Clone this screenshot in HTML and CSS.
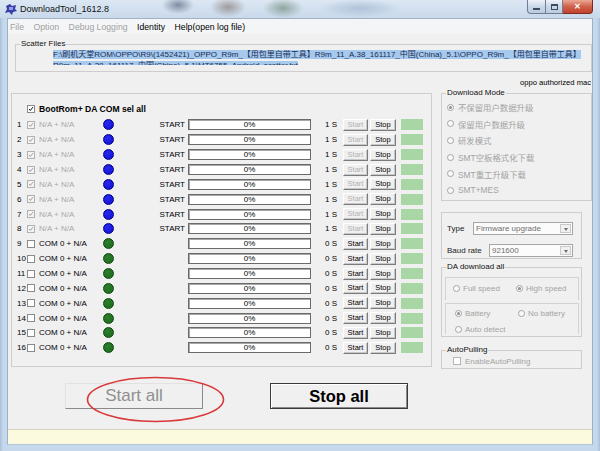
FILE: index.html
```html
<!DOCTYPE html>
<html lang="en">
<head>
    <meta charset="UTF-8">
    <title>DownloadTool_1612.8</title>
    <link rel="stylesheet" href="styles.css">
</head>
<body>
<div class="window">
    <div class="titlebar">
        <svg class="app-icon" width="12" height="11" viewBox="0 0 12 11">
            <path d="M1 2 L5 0 L7 2 L11 1 L10 5 L12 7 L8 8 L7 11 L4 8 L0 9 L2 5 Z" fill="#3a3fa8"/>
            <path d="M4 3 L8 3 L8 6 L4 6 Z" fill="#8fa0e6"/>
        </svg>
        <span class="title">DownloadTool_1612.8</span>
        <div class="caption">
            <span class="cap cap-min"><i></i></span>
            <span class="cap cap-max"><i></i></span>
            <span class="cap cap-close">&#x2715;</span>
        </div>
    </div>
    <div class="frame">
        <div class="client">
            <div class="menubar">
                <span class="menu off">File</span>
                <span class="menu off">Option</span>
                <span class="menu off">Debug Logging</span>
                <span class="menu">Identity</span>
                <span class="menu">Help(open log file)</span>
            </div>

            <fieldset class="group scatter">
                <legend>Scatter Files</legend>
                <div class="path">
                    <span class="sel">F:\刷机天堂ROM\OPPO\R9\(1452421)_OPPO_R9m_【用包里自带工具】R9m_11_A.38_161117_中国(China)_5.1\OPPO_R9m_【用包里自带工具】</span><br>
                    <span class="sel">R9m_11_A.38_161117_中国(China)_5.1\MT6755_Android_scatter.txt</span>
                </div>
            </fieldset>

            <div class="auth">oppo authorized mac</div>

            <div class="workspace">
                <div class="group ports">
                    <div class="sel-all">
                        <span class="check checked on"><svg viewBox="0 0 8 8"><polyline points="1.5,4 3.2,6 6.5,1.5"/></svg></span>
                        <b>BootRom+ DA COM sel all</b>
                    </div>
                    <div id="rows" class="rows"></div>
                </div>

                <div class="side">
                    <fieldset class="group mode">
                        <legend>Download Mode</legend>
                        <div class="opts">
                            <div class="opt"><span class="radio on"></span>不保留用户数据升级</div>
                            <div class="opt"><span class="radio"></span>保留用户数据升级</div>
                            <div class="opt"><span class="radio"></span>研发模式</div>
                            <div class="opt"><span class="radio"></span>SMT空板格式化下载</div>
                            <div class="opt"><span class="radio"></span>SMT重工升级下载</div>
                            <div class="opt"><span class="radio"></span>SMT+MES</div>
                        </div>
                    </fieldset>

                    <div class="group settings">
                        <div class="field">
                            <span class="field-label">Type</span>
                            <span class="combo type-combo">Firmware upgrade<span class="drop"></span></span>
                        </div>
                        <div class="field">
                            <span class="field-label">Baud rate</span>
                            <span class="combo baud-combo">921600<span class="drop"></span></span>
                        </div>
                    </div>

                    <fieldset class="group da">
                        <legend>DA download all</legend>
                        <div class="da-body">
                            <div class="sub speed">
                                <span class="opt-inline"><span class="radio"></span>Full speed</span>
                                <span class="opt-inline"><span class="radio on"></span>High speed</span>
                            </div>
                            <div class="sub battery">
                                <div class="sub-row">
                                    <span class="opt-inline"><span class="radio on"></span>Battery</span>
                                    <span class="opt-inline"><span class="radio"></span>No battery</span>
                                </div>
                                <div class="sub-row">
                                    <span class="opt-inline"><span class="radio"></span>Auto detect</span>
                                </div>
                            </div>
                        </div>
                    </fieldset>

                    <fieldset class="group pulling">
                        <legend>AutoPulling</legend>
                        <div class="opt-inline"><span class="check"></span>EnableAutoPulling</div>
                    </fieldset>
                </div>
            </div>

            <div class="actions">
                <button class="big start-all" disabled>Start all</button>
                <button class="big stop-all">Stop all</button>
                <svg class="mark" width="139" height="47" viewBox="0 0 139 47">
                    <ellipse cx="69.5" cy="23.5" rx="68" ry="22" fill="none" stroke="#d9383a" stroke-width="1.6"/>
                </svg>
            </div>

            <div class="statusbar"></div>
        </div>
    </div>
</div>

<script>
    const rows = document.getElementById("rows");
    const tick = '<svg viewBox="0 0 8 8"><polyline points="1.5,4 3.2,6 6.5,1.5"/></svg>';

    for (let i = 1; i <= 16; i++) {
        let found = i <= 8;
        let row = document.createElement("div");
        row.className = "port" + (found ? " found" : "");
        row.innerHTML =
            '<span class="num">' + i + '</span>' +
            '<span class="check' + (found ? ' checked' : '') + '">' + (found ? tick : '') + '</span>' +
            '<span class="port-name">' + (found ? 'N/A + N/A' : 'COM 0 + N/A') + '</span>' +
            '<span class="led"></span>' +
            '<span class="state">' + (found ? 'START' : '') + '</span>' +
            '<span class="progress">0%</span>' +
            '<span class="time">' + (found ? 1 : 0) + ' S</span>' +
            '<button class="mini"' + (found ? ' disabled' : '') + '>Start</button>' +
            '<button class="mini">Stop</button>' +
            '<span class="lamp"></span>';
        rows.appendChild(row);
    }
</script>
</body>
</html>
```

FILE: styles.css
```css
* {
    box-sizing: border-box;
}
body {
    margin: 0;
    font-family: "Liberation Sans", Arial, "Noto Sans CJK SC", sans-serif;
    font-size: 8px;
    color: #000;
}
.window {
    width: 600px;
    height: 451px;
    display: flex;
    flex-direction: column;
    overflow: hidden;
    background: linear-gradient(90deg, #a9c0da, #c6d8ec 3px, #c6d8ec 597px, #a9c0da);
}

/* title bar */
.titlebar {
    height: 18px;
    display: flex;
    align-items: center;
    padding-left: 5px;
    background:
        radial-gradient(ellipse 16px 9px at 178px 5px, rgba(55, 70, 95, .55), transparent),
        radial-gradient(ellipse 18px 10px at 228px 7px, rgba(95, 70, 55, .45), transparent),
        radial-gradient(ellipse 20px 10px at 283px 8px, rgba(60, 95, 60, .45), transparent),
        radial-gradient(ellipse 40px 9px at 360px 8px, rgba(110, 140, 175, .35), transparent),
        linear-gradient(#dce7f3, #c9d9eb);
}
.app-icon {
    margin-right: 3px;
}
.title {
    font-size: 9px;
    color: #111;
}
.caption {
    margin-left: auto;
    margin-right: 7px;
    align-self: flex-start;
    display: flex;
}
.cap {
    height: 14px;
    display: flex;
    align-items: center;
    justify-content: center;
    border: 1px solid #6d7e96;
    border-top: 0;
    background: linear-gradient(#eef3f9, #cbd8e8 50%, #bccbdd);
}
.cap-min {
    width: 18px;
    border-radius: 0 0 0 4px;
    border-right: 0;
}
.cap-min i {
    width: 7px;
    height: 2px;
    margin-top: 5px;
    background: #3d4b60;
}
.cap-max {
    width: 18px;
}
.cap-max i {
    width: 7px;
    height: 6px;
    border: 1px solid #3d4b60;
    border-top-width: 2px;
}
.cap-close {
    width: 30px;
    border-color: #7d2a22;
    border-left: 0;
    border-radius: 0 0 4px 0;
    background: linear-gradient(#eba995, #d0614a 50%, #c0432d);
    color: #fff;
    font-size: 8px;
    font-weight: bold;
}

/* client area */
.frame {
    flex: 1;
    display: flex;
    padding: 0 7px 6px 7px;
}
.client {
    flex: 1;
    display: flex;
    flex-direction: column;
    background: #f0f0f0;
    border: 1px solid #9fb1c6;
    border-bottom-color: #b5c4d4;
}
.menubar {
    height: 15px;
    display: flex;
    align-items: center;
    gap: 9.5px;
    padding-left: 2px;
    font-size: 8.7px;
    background: #f4f5f6;
}
.menu.off {
    color: #a2a2a2;
}

.group {
    border: 1px solid #cdcdcd;
    margin: 0;
    padding: 0;
    min-width: 0;
}
.group legend {
    padding: 0 1px;
    margin-left: 4px;
    line-height: 10px;
    font-size: 8px;
    color: #111;
}

.scatter {
    margin: 5px 0 0 7px;
}
.path {
    height: 15px;
    margin: 1px 0 6px 37px;
    overflow: hidden;
    white-space: nowrap;
    line-height: 10.5px;
    font-size: 8px;
}
.sel {
    background: #a6c9ee;
    color: #1b2d54;
}

.auth {
    margin-top: 6px;
    line-height: 10px;
    text-align: right;
    padding-right: 1px;
    font-size: 7.6px;
}

.workspace {
    height: 282px;
    display: flex;
    gap: 9px;
    padding-left: 3px;
}

/* ports list */
.ports {
    width: 421px;
    height: 274px;
    margin-top: 5px;
    padding-left: 5px;
}
.sel-all {
    display: flex;
    align-items: center;
    height: 12px;
    margin-top: 9px;
    padding-left: 10px;
    font-size: 8.6px;
}
.sel-all .check {
    margin-right: 4px;
}
.rows {
    margin-top: 2.5px;
}
.port {
    height: 14.87px;
    display: flex;
    align-items: center;
}
.num {
    width: 10px;
}
.check {
    width: 8px;
    height: 8px;
    flex: none;
    border: 1px solid #8b8b8b;
    background: #fff;
    margin-right: 4px;
    display: flex;
}
.check svg {
    width: 100%;
    height: 100%;
    fill: none;
    stroke: #9a9a9a;
    stroke-width: 1.3;
}
.check.on svg {
    stroke: #111;
}
.found .check {
    border-color: #b0b0b0;
    background: #f4f4f4;
}
.port-name {
    width: 64px;
}
.found .port-name {
    color: #a8a8a8;
}
.led {
    width: 11px;
    height: 11px;
    border-radius: 50%;
    margin-right: 1px;
    background: radial-gradient(circle at 40% 35%, #2d7f2d, #186a18);
    border: 1px solid #0e470e;
}
.found .led {
    background: radial-gradient(circle at 40% 35%, #2a2af0, #0d0dd0);
    border-color: #000088;
}
.state {
    width: 73px;
    text-align: right;
    padding-right: 3px;
}
.progress {
    width: 123px;
    height: 11px;
    line-height: 9px;
    text-align: center;
    background: #fff;
    border: 1px solid #6a6a6a;
    box-shadow: inset 1px 1px #a8a8a8;
}
.time {
    width: 32px;
    padding-left: 14px;
}
.mini {
    height: 12px;
    padding: 0;
    font-family: inherit;
    font-size: 7.5px;
    line-height: 10px;
    color: #000;
    background: #f0f0f0;
    border: 1px solid #fff;
    border-right-color: #7b7b7b;
    border-bottom-color: #7b7b7b;
    box-shadow: inset -1px -1px #c8c8c8;
}
.mini:disabled {
    color: #b0b0b0;
}
.mini:nth-of-type(1) {
    width: 25px;
    margin-right: 2px;
}
.mini:nth-of-type(2) {
    width: 26px;
    margin-right: 5px;
}
.lamp {
    width: 22px;
    height: 11px;
    background: #a9d6a5;
}

/* right column */
.side {
    width: 151px;
    display: flex;
    flex-direction: column;
}
.mode legend {
    margin-left: 4px;
}
.opts {
    padding: 1px 0 1px 5px;
}
.opt {
    height: 16.6px;
    display: flex;
    align-items: center;
    color: #a3a3a3;
    font-size: 8.4px;
}
.radio {
    width: 7px;
    height: 7px;
    flex: none;
    border-radius: 50%;
    border: 1px solid #a3a3a3;
    background: #fafafa;
    margin-right: 4px;
    display: flex;
    align-items: center;
    justify-content: center;
}
.radio.on::after {
    content: "";
    width: 3px;
    height: 3px;
    border-radius: 50%;
    background: #8e8e8e;
}

.settings {
    width: 141px;
    margin-top: 11.5px;
    padding: 9px 8px 1px 5px;
    display: flex;
    flex-direction: column;
    gap: 9px;
}
.field {
    height: 13px;
    display: flex;
    align-items: center;
}
.field-label {
    font-size: 8px;
    color: #222;
}
.combo {
    margin-left: auto;
    height: 13px;
    display: flex;
    align-items: center;
    padding-left: 2px;
    border: 1px solid #a6a6a6;
    background: #fbfbfb;
    color: #6f6f6f;
    font-size: 8px;
}
.type-combo {
    width: 100px;
}
.baud-combo {
    width: 84px;
}
.drop {
    margin-left: auto;
    width: 11px;
    height: 9px;
    margin-right: 1px;
    border: 1px solid #c9c9c9;
    background: #f0f0f0;
    display: flex;
    align-items: center;
    justify-content: center;
}
.drop::after {
    content: "";
    border: 2.5px solid transparent;
    border-top: 3px solid #6d6d6d;
    margin-top: 3px;
}

.da {
    width: 141px;
    margin-top: 3px;
    height: 75px;
    overflow: hidden;
}
.da-body {
    padding: 5px 2px 2px 3px;
}
.sub {
    border: 1px solid #d2d2d2;
    border-bottom: 0;
    color: #a3a3a3;
    font-size: 8px;
}
.speed {
    height: 23px;
    display: flex;
    align-items: center;
    padding: 0 0 1px 7px;
}
.battery {
    height: 31px;
    margin-top: 3px;
    padding: 4px 0 0 9px;
    overflow: hidden;
    display: flex;
    flex-direction: column;
    gap: 6px;
}
.sub-row {
    height: 10px;
    display: flex;
    align-items: center;
}
.opt-inline {
    display: flex;
    align-items: center;
    width: 63px;
    flex: none;
}
.opt-inline .radio {
    margin-right: 3px;
}

.pulling {
    width: 141px;
    margin-top: 8px;
}
.pulling .opt-inline {
    height: 12px;
    width: auto;
    margin: 0 0 1px 11px;
    color: #a3a3a3;
    font-size: 8px;
}
.pulling .check {
    border-color: #b5b5b5;
    margin-right: 4px;
}

/* bottom buttons */
.actions {
    position: relative;
    margin-top: 13px;
    height: 26px;
    display: flex;
    padding-left: 57px;
    gap: 67px;
}
.big {
    width: 138px;
    height: 26px;
    padding: 0;
    font-family: inherit;
    font-size: 17px;
    background: #f0f0f0;
}
.start-all {
    color: #8f8f8f;
    border: 1px solid #e2e2e2;
    border-right-color: #8a8a8a;
    border-bottom-color: #8a8a8a;
}
.stop-all {
    font-weight: bold;
    font-size: 16.5px;
    color: #000;
    border: 1px solid #3a3a3a;
    box-shadow: inset 1px 1px #fff, inset -1px -1px #8a8a8a;
}
.mark {
    position: absolute;
    left: 78px;
    top: -7px;
}

.statusbar {
    margin-top: auto;
    height: 15px;
    background: #fcfade;
    border-top: 1px solid #d6d3bd;
}
```
